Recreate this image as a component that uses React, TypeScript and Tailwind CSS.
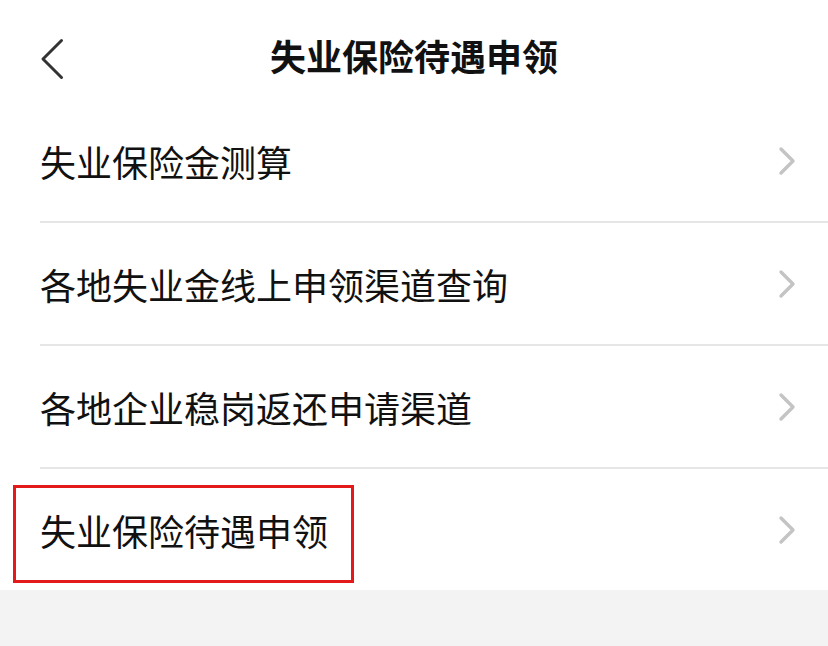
import React from "react";

const items = [
  "失业保险金测算",
  "各地失业金线上申领渠道查询",
  "各地企业稳岗返还申请渠道",
  "失业保险待遇申领",
];

const BackIcon = () => (
  <svg width="24" height="42" viewBox="0 0 24 42" fill="none">
    <path d="M21.5 2.5 L3 21 L21.5 39.5" stroke="#333" strokeWidth="3" strokeLinecap="round" strokeLinejoin="round" />
  </svg>
);

const ArrowRight = () => (
  <svg width="20" height="30" viewBox="0 0 20 30" fill="none">
    <path d="M3 3 L15 15 L3 27" stroke="#c4c4c4" strokeWidth="3.4" strokeLinecap="round" strokeLinejoin="round" />
  </svg>
);

const App = () => {
  return (
    <div
      className="min-h-screen bg-[#f3f3f3] text-[#111]"
      style={{ fontFamily: '"Noto Sans CJK SC", "Noto Sans", sans-serif' }}
    >
      <div className="bg-white">
        <div className="relative flex h-[100px] items-center justify-center pt-[10px]">
          <div className="absolute left-[40px] top-[38px]">
            <BackIcon />
          </div>
          <h1 className="text-[36px] font-bold leading-none">失业保险待遇申领</h1>
        </div>
        <ul className="pl-[40px]">
          {items.map((item, i) => (
            <li
              key={item}
              className={`relative flex items-center justify-between pr-[30px] ${
                i < items.length - 1 ? "h-[123px] border-b-2 border-[#e6e6e6]" : "h-[121px]"
              }`}
            >
              <span className="text-[36px] leading-none">{item}</span>
              <ArrowRight />
              {i === items.length - 1 && (
                <div className="absolute left-[-27px] top-[16px] h-[98px] w-[341px] border-[3px] border-[#e31a1a]" />
              )}
            </li>
          ))}
        </ul>
      </div>
    </div>
  );
};

export default App;
